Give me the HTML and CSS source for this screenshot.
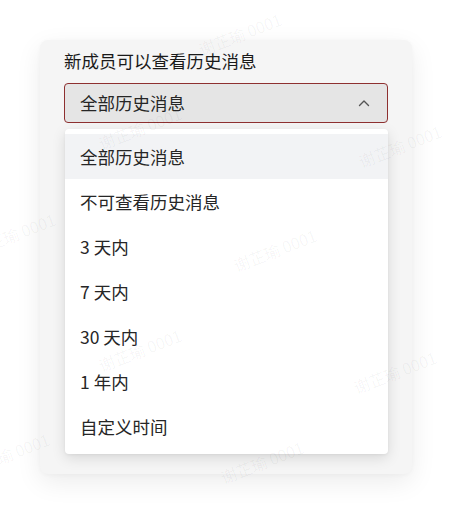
FILE: index.html
```html
<!DOCTYPE html>
<html lang="zh-CN">
<head>
<meta charset="utf-8">
<title>新成员可以查看历史消息</title>
<link rel="stylesheet" href="styles.css">
</head>
<body>
<div class="page">
  <div class="card">
    <div class="field-label">新成员可以查看历史消息</div>
    <div class="select-wrap">
      <div class="select">
        <span class="select-value">全部历史消息</span>
        <svg class="chevron" width="12" height="8" viewBox="0 0 12 8"><path d="M1.5 6.5 L6 2 L10.5 6.5" fill="none" stroke="#555" stroke-width="1.4" stroke-linecap="round" stroke-linejoin="round"/></svg>
      </div>
      <ul class="menu">
        <li class="option active">全部历史消息</li>
        <li class="option">不可查看历史消息</li>
        <li class="option">3 天内</li>
        <li class="option">7 天内</li>
        <li class="option">30 天内</li>
        <li class="option">1 年内</li>
        <li class="option">自定义时间</li>
      </ul>
    </div>
  </div>
  <div class="watermarks" aria-hidden="true">
    <span class="wm wm1">谢芷瑜 0001</span>
    <span class="wm wm2">谢芷瑜 0001</span>
    <span class="wm wm3">谢芷瑜 0001</span>
    <span class="wm wm4">谢芷瑜 0001</span>
    <span class="wm wm5">谢芷瑜 0001</span>
    <span class="wm wm6">谢芷瑜 0001</span>
    <span class="wm wm7">谢芷瑜 0001</span>
    <span class="wm wm8">谢芷瑜 0001</span>
    <span class="wm wm9">谢芷瑜 0001</span>
  </div>
</div>
</body>
</html>
```
FILE: styles.css
```css
* { box-sizing: border-box; }
html, body {
  margin: 0;
  padding: 0;
  background: #ffffff;
}
body {
  font-family: "Noto Sans CJK SC", "Noto Sans", sans-serif;
  font-weight: 400;
  color: #262626;
}
.page {
  position: relative;
  width: 453px;
  height: 515px;
  overflow: hidden;
  padding: 40px 0 0 40px;
}
.card {
  width: 372px;
  height: 434px;
  background: #f5f5f5;
  border-radius: 8px;
  box-shadow: 0 8px 26px rgba(0, 0, 0, 0.08), 0 1px 4px rgba(0, 0, 0, 0.03);
  padding: 9px 24px 0 24px;
}
.field-label {
  font-size: 17.5px;
  line-height: 24px;
  color: #1a1a1a;
}
.select-wrap {
  position: relative;
  margin-top: 10px;
}
.select {
  height: 40px;
  border: 1px solid #8e3030;
  border-radius: 4px;
  background: #e5e5e5;
  display: flex;
  align-items: center;
  justify-content: space-between;
  padding: 0 17px 0 15px;
}
.select-value {
  font-size: 17.5px;
  line-height: 24px;
  color: #262626;
}
.chevron { display: block; }
.menu {
  position: absolute;
  top: 46px;
  left: 1px;
  width: 323px;
  margin: 0;
  padding: 5px 0;
  list-style: none;
  background: #ffffff;
  border-radius: 4px;
  box-shadow: 0 4px 14px rgba(0, 0, 0, 0.12), 0 1px 3px rgba(0, 0, 0, 0.05);
  z-index: 2;
}
.option {
  height: 45px;
  display: flex;
  align-items: center;
  padding-left: 15px;
  font-size: 17.5px;
  color: #262626;
}
.option.active {
  background: #f2f3f5;
}
.watermarks {
  position: absolute;
  inset: 0;
  pointer-events: none;
  z-index: 5;
}
.wm {
  position: absolute;
  width: 110px;
  height: 22px;
  margin: -11px 0 0 -55px;
  text-align: center;
  font-size: 16px;
  line-height: 22px;
  color: rgba(0, 0, 0, 0.045);
  transform: rotate(-21deg);
  white-space: nowrap;
}
.wm1 { left: 140px; top: 128px; }
.wm2 { left: 400px; top: 146px; }
.wm3 { left: 14px; top: 234px; }
.wm4 { left: 275px; top: 250px; }
.wm5 { left: 140px; top: 350px; }
.wm6 { left: 395px; top: 372px; }
.wm7 { left: 8px; top: 454px; }
.wm8 { left: 262px; top: 462px; }
.wm9 { left: 240px; top: 34px; }
```
